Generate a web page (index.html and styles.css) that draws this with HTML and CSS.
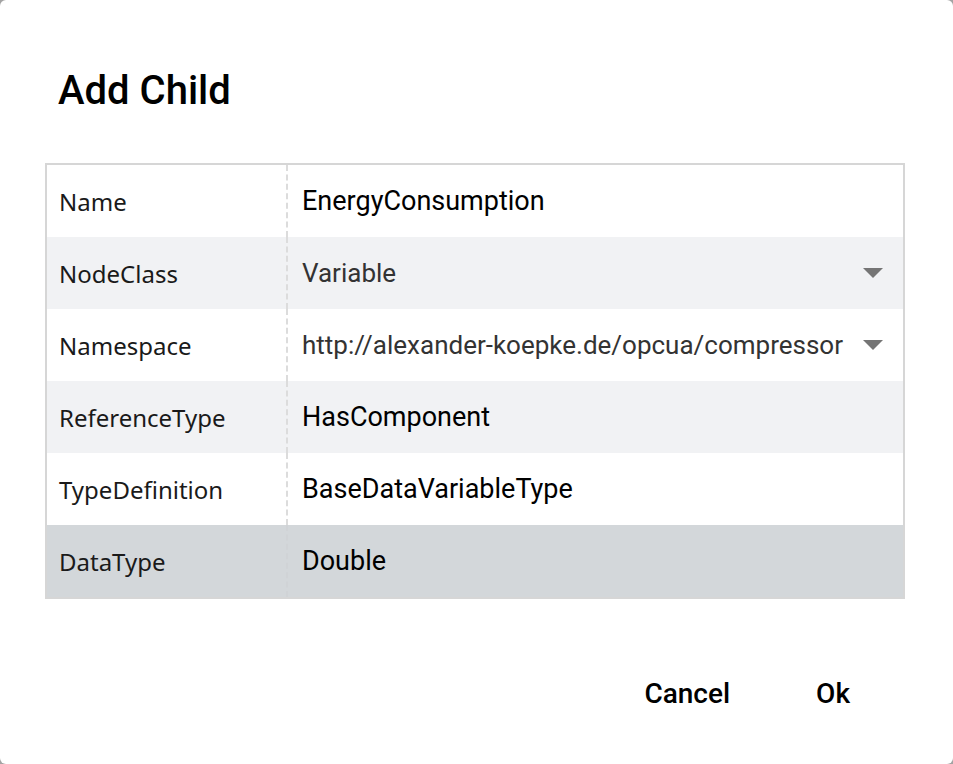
FILE: index.html
```html
<!DOCTYPE html>
<html>
<head>
<meta charset="utf-8">
<link rel="stylesheet" href="styles.css">
</head>
<body>
<div class="dialog">
  <h1 class="title">Add Child</h1>
  <div class="table">
    <div class="row">
      <div class="label">Name</div>
      <div class="value">EnergyConsumption</div>
    </div>
    <div class="row alt">
      <div class="label">NodeClass</div>
      <div class="value select"><span class="seltext">Variable</span><span class="arrow"></span></div>
    </div>
    <div class="row">
      <div class="label">Namespace</div>
      <div class="value select"><span class="seltext">http://alexander-koepke.de/opcua/compressor</span><span class="arrow"></span></div>
    </div>
    <div class="row alt">
      <div class="label">ReferenceType</div>
      <div class="value">HasComponent</div>
    </div>
    <div class="row">
      <div class="label">TypeDefinition</div>
      <div class="value">BaseDataVariableType</div>
    </div>
    <div class="row selected">
      <div class="label">DataType</div>
      <div class="value">Double</div>
    </div>
  </div>
  <div class="actions">
    <button class="btn">Cancel</button>
    <button class="btn">Ok</button>
  </div>
</div>
</body>
</html>
```
FILE: styles.css
```css
html, body {
  margin: 0;
  padding: 0;
  background: #a3a3a3;
  height: 100%;
}
.dialog {
  box-sizing: border-box;
  width: 953px;
  height: 764px;
  background: #fff;
  border-radius: 6px;
  padding: 66px 48px 0 45px;
  font-family: Roboto, "Liberation Sans", sans-serif;
  color: #000;
}
.title {
  margin: 0 0 0 13px;
  font-size: 40px;
  font-weight: 500;
  line-height: 50px;
  letter-spacing: 0;
}
.table {
  margin-top: 47px;
  border: 2px solid #d6d6d6;
  width: 860px;
  box-sizing: border-box;
}
.row {
  display: grid;
  grid-template-columns: 241px 1fr;
  height: 72px;
  background: #fff;
}
.row.alt { background: #f1f2f4; }
.row.selected { background: #d3d7da; }
.label {
  display: flex;
  align-items: center;
  padding-left: 12px;
  font-family: "Noto Sans", "Open Sans", sans-serif;
  font-size: 24px;
  color: #1a1a1a;
  border-right: 2px dashed #dcdcdc;
}
.row.selected .label { border-right-color: #d0d3d6; }
.value {
  display: flex;
  align-items: center;
  padding-left: 14px;
  font-size: 27px;
  color: #000;
}
.value.select {
  font-size: 26px;
  color: #333;
  justify-content: space-between;
  padding-right: 20px;
}
.arrow {
  flex: none;
  width: 0;
  height: 0;
  border-left: 10px solid transparent;
  border-right: 10px solid transparent;
  border-top: 10px solid #757575;
}
.actions {
  display: flex;
  justify-content: flex-end;
  gap: 54px;
  margin-top: 70px;
  padding-right: 39px;
}
.btn {
  background: none;
  border: none;
  font-family: Roboto, "Liberation Sans", sans-serif;
  font-weight: 500;
  font-size: 28px;
  color: #000;
  padding: 8px 16px;
  cursor: pointer;
}
```
